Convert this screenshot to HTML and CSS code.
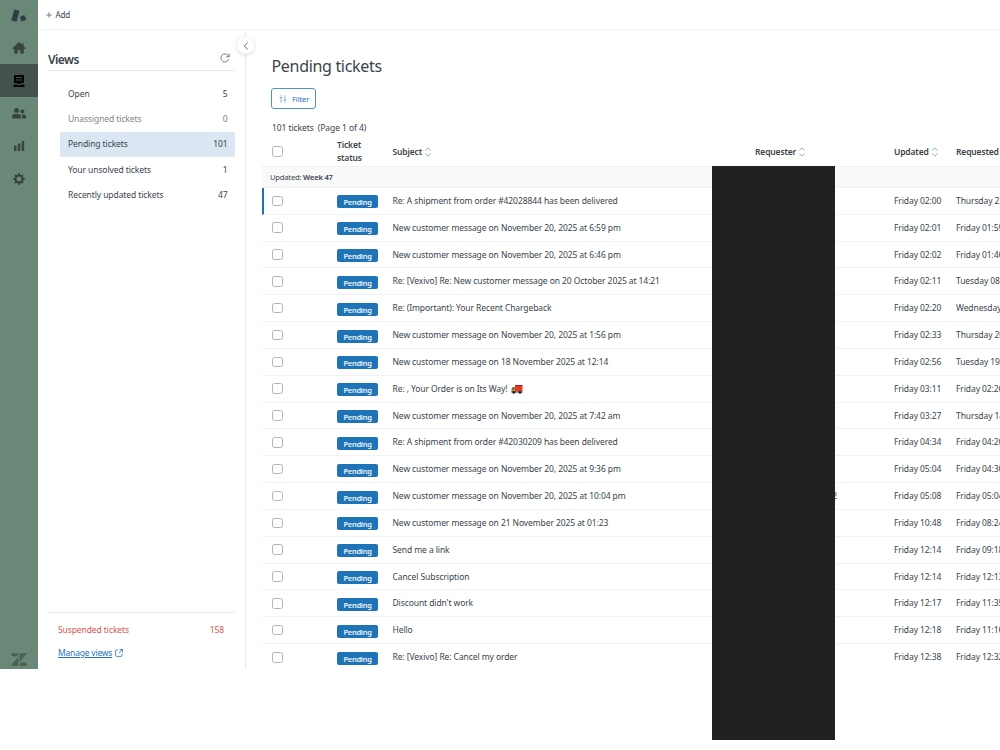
FILE: index.html
```html
<!DOCTYPE html>
<html lang="en">
<head>
    <meta charset="UTF-8">
    <meta name="viewport" content="width=device-width, initial-scale=1.0">
    <title>Pending tickets</title>
    <link rel="stylesheet" href="styles.css">
</head>
<body>

    <!-- Shared icons -->
    <svg class="sprite" width="0" height="0">
        <symbol id="sort" viewBox="0 0 6 10">
            <path d="M.7 3.5V3L3 .9 5.3 3v.5M.7 6.500V7L3 9.100 5.300 7v-.5" fill="none" stroke="#8b959c" stroke-width=".8"/>
        </symbol>
    </svg>

    <div class="app">

        <!-- Main navigation -->
        <nav class="rail">
            <a class="rail-item logo">
                <svg width="16" height="14" viewBox="0 0 16 14" fill="#2f3e46"><path d="M3.200.500 8.500 1.800 5.600 12.800.300 11.400z"/><path d="M8.700 8 13.200 6.100 15.600 10.500 10.600 12.800z"/></svg>
            </a>
            <a class="rail-item">
                <svg width="14" height="12" viewBox="0 0 14 12"><path d="M7 0 .2 6.200l.8.8h1.200v4.500h3.500V8h2.600v3.500h3.500V7H13l.8-.8-2.200-2V1.200h-1.700v1.500z"/></svg>
            </a>
            <a class="rail-item active">
                <svg width="12" height="12" viewBox="0 0 12 12"><path fill-rule="evenodd" d="M2 0h8q1 0 1 1v7H8.200L7.500 9h-3L3.800 8H1V1q0-1 1-1zM3 2v1h6V2zM3 4.500v1h6v-1z"/><path d="M.6 9.500h3l.6.800h3.600l.6-.8h3V12H.6z"/></svg>
            </a>
            <a class="rail-item">
                <svg width="14" height="11" viewBox="0 0 14 11"><circle cx="4.500" cy="2.600" r="2.500"/><circle cx="10.400" cy="3.600" r="2"/><path d="M0 10.500V9q0-3 3-3h3q3 0 3 3v1.500zM10 10.500V9q0-1.300-.7-2.400h2Q14 6.600 14 9v1.500z"/></svg>
            </a>
            <a class="rail-item">
                <svg width="12" height="12" viewBox="0 0 12 12"><rect x="1" y="5.500" width="2.500" height="5.500" rx=".5"/><rect x="4.800" y="3.500" width="2.500" height="7.500" rx=".5"/><rect x="8.700" y="1" width="2.500" height="10" rx=".5"/></svg>
            </a>
            <a class="rail-item">
                <svg width="12" height="12" viewBox="0 0 12 12"><circle cx="6" cy="6" r="3.500" fill="none" stroke="#36463d" stroke-width="2.100"/><path d="M6 .3v2M6 9.700v2M.3 6h2M9.700 6h2M2 2l1.300 1.300M8.700 8.700 10 10M2 10l1.300-1.300M8.700 3.300 10 2" stroke="#36463d" stroke-width="2"/></svg>
            </a>
            <a class="rail-item zendesk">
                <svg width="16" height="13" viewBox="0 0 16 13"><path d="M0 .3h7.300a3.650 3.200 0 0 1-7.300 0zM7.300 3.500v9.200H0zM8.500.3H16L8.500 9.500zM8.500 12.700a3.700 3.500 0 0 1 7.500 0z"/></svg>
            </a>
        </nav>

        <div class="workspace">
            <header class="topbar">
                <svg width="6" height="6" viewBox="0 0 6 6"><path d="M3 .3v5.400M.3 3h5.400" stroke="#68737d" stroke-width=".9"/></svg>
                <span>Add</span>
            </header>

            <div class="columns">

                <!-- Views list -->
                <aside class="views">
                    <div class="views-head">
                        <h2>Views</h2>
                        <svg width="10" height="10" viewBox="0 0 10 10" fill="none" stroke="#68737d" stroke-width=".9"><path d="M8.700 6.300A4 4 0 1 1 8.200 2.600L9 3.700"/><path d="M9.200.5v3.300H6"/></svg>
                    </div>
                    <ul class="view-list">
                        <li><span>Open</span><span>5</span></li>
                        <li class="empty"><span>Unassigned tickets</span><span>0</span></li>
                        <li class="selected"><span>Pending tickets</span><span>101</span></li>
                        <li><span>Your unsolved tickets</span><span>1</span></li>
                        <li><span>Recently updated tickets</span><span>47</span></li>
                    </ul>
                    <div class="views-foot">
                        <div class="suspended"><span>Suspended tickets</span><span>158</span></div>
                        <div class="manage">
                            <a>Manage views</a>
                            <svg width="8" height="8" viewBox="0 0 8 8" fill="none" stroke="#1f73b7" stroke-width=".8"><path d="M3 1H1.500Q.6 1 .6 2v4.400q0 1 .9 1H6q1 0 1-1V5"/><path d="M4.600.5h2.900v2.900M7.400.6 4 4"/></svg>
                        </div>
                    </div>
                    <button class="collapse">
                        <svg width="6" height="8" viewBox="0 0 6 8"><path d="M4.700.7 1.200 4l3.500 3.300" fill="none" stroke="#4c5760" stroke-width=".9"/></svg>
                    </button>
                </aside>

                <!-- Ticket table -->
                <main class="tickets">
                    <h1>Pending tickets</h1>
                    <button class="filter">
                        <svg width="8" height="8" viewBox="0 0 8 8" fill="none" stroke="#5293c7" stroke-width=".7"><path d="M2 2.500v5M.6 2.500h2.800M2 .3v1.200M5.900.5v4.500M4.500 5.200h2.900M5.900 6v1.600"/></svg>
                        <span>Filter</span>
                    </button>
                    <p class="count">101 tickets&nbsp; (Page 1 of 4)</p>

                    <div class="row head">
                        <input type="checkbox">
                        <span>Ticket<br>status</span>
                        <span>Subject <svg class="sort"><use href="#sort"/></svg></span>
                        <span>Requester <svg class="sort"><use href="#sort"/></svg></span>
                        <span>Updated <svg class="sort"><use href="#sort"/></svg></span>
                        <span>Requested</span>
                    </div>
                    <div class="group">Updated: <b>Week 47</b></div>

                    <div class="row current"><input type="checkbox"><b class="badge">Pending</b><span>Re: A shipment from order #42028844 has been delivered</span><span></span><span>Friday 02:00</span><span>Thursday 2</span></div>
                    <div class="row"><input type="checkbox"><b class="badge">Pending</b><span>New customer message on November 20, 2025 at 6:59 pm</span><span></span><span>Friday 02:01</span><span>Friday 01:59</span></div>
                    <div class="row"><input type="checkbox"><b class="badge">Pending</b><span>New customer message on November 20, 2025 at 6:46 pm</span><span></span><span>Friday 02:02</span><span>Friday 01:46</span></div>
                    <div class="row"><input type="checkbox"><b class="badge">Pending</b><span>Re: [Vexivo] Re: New customer message on 20 October 2025 at 14:21</span><span></span><span>Friday 02:11</span><span>Tuesday 08</span></div>
                    <div class="row"><input type="checkbox"><b class="badge">Pending</b><span>Re: (Important): Your Recent Chargeback</span><span></span><span>Friday 02:20</span><span>Wednesday</span></div>
                    <div class="row"><input type="checkbox"><b class="badge">Pending</b><span>New customer message on November 20, 2025 at 1:56 pm</span><span></span><span>Friday 02:33</span><span>Thursday 20</span></div>
                    <div class="row"><input type="checkbox"><b class="badge">Pending</b><span>New customer message on 18 November 2025 at 12:14</span><span></span><span>Friday 02:56</span><span>Tuesday 19</span></div>
                    <div class="row"><input type="checkbox"><b class="badge">Pending</b><span>Re: , Your Order is on Its Way! <svg class="truck" width="12" height="10" viewBox="0 0 12 10"><path d="M4 1h7.500v6.500H4z" fill="#e8392b"/><path d="M4 1h7.500v1H4z" fill="#a3261c"/><path d="M1.500 3H4v5H.4V5.500z" fill="#d98b2b"/><path d="M1.700 3.500h1.700v2H.9z" fill="#2f6b6b"/><path d="M.4 7.500h11.100v1H.4z" fill="#333"/><circle cx="2.800" cy="8.400" r="1.400" fill="#222"/><circle cx="9" cy="8.400" r="1.400" fill="#222"/></svg></span><span></span><span>Friday 03:11</span><span>Friday 02:26</span></div>
                    <div class="row"><input type="checkbox"><b class="badge">Pending</b><span>New customer message on November 20, 2025 at 7:42 am</span><span></span><span>Friday 03:27</span><span>Thursday 14</span></div>
                    <div class="row"><input type="checkbox"><b class="badge">Pending</b><span>Re: A shipment from order #42030209 has been delivered</span><span></span><span>Friday 04:34</span><span>Friday 04:26</span></div>
                    <div class="row"><input type="checkbox"><b class="badge">Pending</b><span>New customer message on November 20, 2025 at 9:36 pm</span><span></span><span>Friday 05:04</span><span>Friday 04:36</span></div>
                    <div class="row"><input type="checkbox"><b class="badge">Pending</b><span>New customer message on November 20, 2025 at 10:04 pm</span><span class="requester-end">2</span><span>Friday 05:08</span><span>Friday 05:04</span></div>
                    <div class="row"><input type="checkbox"><b class="badge">Pending</b><span>New customer message on 21 November 2025 at 01:23</span><span></span><span>Friday 10:48</span><span>Friday 08:24</span></div>
                    <div class="row"><input type="checkbox"><b class="badge">Pending</b><span>Send me a link</span><span></span><span>Friday 12:14</span><span>Friday 09:18</span></div>
                    <div class="row"><input type="checkbox"><b class="badge">Pending</b><span>Cancel Subscription</span><span></span><span>Friday 12:14</span><span>Friday 12:13</span></div>
                    <div class="row"><input type="checkbox"><b class="badge">Pending</b><span>Discount didn't work</span><span></span><span>Friday 12:17</span><span>Friday 11:35</span></div>
                    <div class="row"><input type="checkbox"><b class="badge">Pending</b><span>Hello</span><span></span><span>Friday 12:18</span><span>Friday 11:16</span></div>
                    <div class="row"><input type="checkbox"><b class="badge">Pending</b><span>Re: [Vexivo] Re: Cancel my order</span><span></span><span>Friday 12:38</span><span>Friday 12:32</span></div>
                </main>
            </div>
        </div>
    </div>

    <!-- Hides the requester names -->
    <div class="redaction"></div>

</body>
</html>
```
FILE: styles.css
```css
* {
    box-sizing: border-box;
}

body {
    margin: 0;
    height: 750px;
    position: relative;
    overflow: hidden;
    background: #fff;
    color: #3a444c;
    font-family: "Noto Sans", "Open Sans", sans-serif;
    font-size: 8.5px;
    letter-spacing: -0.09px;
    line-height: 12px;
}

h1, h2, p, ul {
    margin: 0;
    padding: 0;
}

svg {
    display: block;
    flex: none;
}

.sprite {
    position: absolute;
}

.app {
    display: flex;
    height: 669px;
    overflow: hidden;
}

/* Main navigation */
.rail {
    display: flex;
    flex-direction: column;
    flex: none;
    width: 38px;
    background: #6a8877;
}

.rail-item {
    display: flex;
    align-items: center;
    justify-content: center;
    height: 32.8px;
    fill: #36463d;
}

.rail-item.logo {
    height: 31.5px;
}

.rail-item.active {
    background: #43524a;
    fill: #000;
}

.rail-item.zendesk {
    height: 19px;
    margin-top: auto;
    fill: #4a6053;
}

.workspace {
    display: flex;
    flex-direction: column;
    flex: 1;
    min-width: 0;
}

.topbar {
    display: flex;
    align-items: center;
    gap: 3.5px;
    height: 30px;
    padding: 0 8px;
    border-bottom: 1px solid #f0f2f3;
    font-size: 8px;
}

.columns {
    display: flex;
    flex: 1;
    min-height: 0;
    padding-top: 1px;
}

/* Views list */
.views {
    position: relative;
    display: flex;
    flex-direction: column;
    flex: none;
    width: 208px;
    padding: 0 10px;
    border-right: 1px solid #e9ecee;
}

.views-head {
    display: flex;
    align-items: center;
    justify-content: space-between;
    height: 40px;
    padding: 15px 5px 0 0;
    border-bottom: 1px solid #e6e9eb;
}

.views-head h2 {
    padding-top: 3px;
    font-size: 12px;
    font-weight: 600;
    letter-spacing: -0.55px;
}

.view-list {
    margin: 10px 0 0 12px;
    list-style: none;
}

.view-list li {
    display: flex;
    align-items: center;
    justify-content: space-between;
    height: 25.3px;
    padding: 0 7.5px 0 8px;
    border-radius: 2px;
}

.view-list .empty {
    color: #7d868d;
}

.view-list .selected {
    background: #dae6f2;
}

.views-foot {
    height: 57px;
    margin-top: auto;
    padding: 11px 11px 0 10px;
    border-top: 1px solid #e6e9eb;
}

.suspended {
    display: flex;
    justify-content: space-between;
    color: #d9534f;
}

.manage {
    display: flex;
    align-items: center;
    gap: 3px;
    margin-top: 11px;
    color: #1f73b7;
}

.manage a {
    letter-spacing: -0.2px;
    text-decoration: underline;
}

.collapse {
    position: absolute;
    top: 6px;
    right: -9px;
    display: flex;
    align-items: center;
    justify-content: center;
    width: 17px;
    height: 17px;
    padding: 0;
    border: 0;
    border-radius: 50%;
    background: #fff;
    box-shadow: 0 1px 4px rgba(47, 57, 65, 0.2);
}

/* Ticket table */
.tickets {
    flex: 1;
    min-width: 0;
    padding-left: 16px;
    overflow: hidden;
}

.tickets h1 {
    margin: 23px 0 0 9.5px;
    font-size: 16px;
    font-weight: 400;
    letter-spacing: -0.32px;
    line-height: 24px;
}

.filter {
    display: flex;
    align-items: center;
    gap: 5px;
    width: 44.5px;
    height: 21px;
    margin: 10px 0 0 9px;
    padding: 0 7px;
    border: 1px solid #5293c7;
    border-radius: 3px;
    background: #fff;
    color: #1f73b7;
    font: inherit;
    font-size: 7.5px;
    letter-spacing: -0.09px;
}

.count {
    margin: 13px 0 0 10px;
}

.row {
    display: grid;
    grid-template-columns: 65px 55.5px 362.5px 139px 62px 80px;
    align-items: center;
    height: 26.84px;
    padding-left: 10px;
    border-bottom: 1px solid #f0f2f3;
    white-space: nowrap;
}

.row:last-child {
    border-bottom: 0;
}

.row.head {
    height: 33px;
    padding-top: 5px;
    font-weight: 600;
    letter-spacing: -0.15px;
    line-height: 12.5px;
}

.row.head input,
.row.head span:nth-child(2) {
    position: relative;
    top: -1px;
}

.row.current {
    border-left: 2px solid #1f73b7;
    padding-left: 8px;
}

.row input {
    appearance: none;
    width: 10.5px;
    height: 10.5px;
    margin: 0;
    border: 1px solid #adb5ba;
    border-radius: 2.5px;
    background: #fff;
}

.sort {
    display: inline-block;
    width: 6px;
    height: 10px;
    margin-left: 1px;
    vertical-align: -2px;
}

.truck {
    display: inline-block;
    margin-left: 1px;
    vertical-align: -2px;
}

.group {
    height: 21px;
    padding-left: 8px;
    border-bottom: 1px solid #f0f2f3;
    background: #f8f9f9;
    font-size: 7.6px;
    letter-spacing: -0.2px;
    line-height: 21px;
}

.group b {
    font-weight: 600;
}

.badge {
    width: 41px;
    height: 13px;
    margin-top: 2px;
    border-radius: 2px;
    background: #1f73b7;
    color: #eaf3fa;
    font-size: 7.5px;
    font-weight: 600;
    letter-spacing: -0.28px;
    line-height: 14px;
    text-align: center;
}

.requester-end {
    width: 82px;
    text-align: right;
}

.redaction {
    position: absolute;
    top: 166px;
    left: 712px;
    width: 122.5px;
    height: 574px;
    background: #212121;
}
```
